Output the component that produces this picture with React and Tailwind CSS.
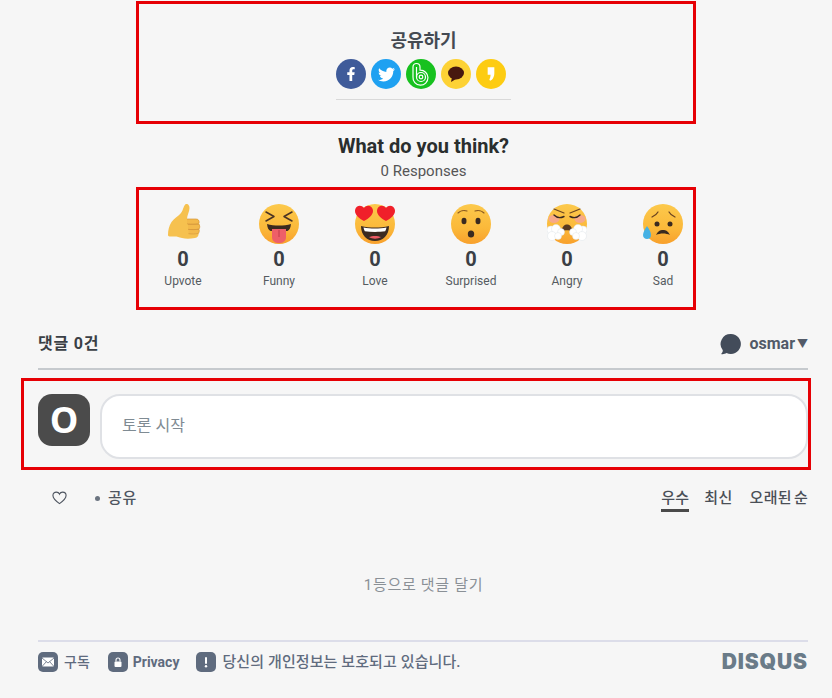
import { FaFacebookF, FaTwitter } from 'react-icons/fa'

const sans = "font-['Roboto','Noto_Sans_CJK_KR',sans-serif]"

function Face({ id, children }) {
  return (
    <svg width="40" height="40" viewBox="0 0 40 40">
      <defs>
        <linearGradient id={id} x1="0" y1="0" x2="0" y2="1">
          <stop offset="0" stopColor="#fcc94c" />
          <stop offset="0.6" stopColor="#fbb93a" />
          <stop offset="1" stopColor="#f8a02c" />
        </linearGradient>
      </defs>
      <circle cx="20" cy="20" r="20" fill={`url(#${id})`} />
      {children}
    </svg>
  )
}

function Thumb() {
  return (
    <svg width="40" height="40" viewBox="0 0 40 40">
      <path d="M23 0c2-.5 3.500 1.500 3.500 4 0 4-2.500 7-2.500 11h9c2.500 0 3.500 2 3 4 1 1.500 1 3.500 0 5 .5 1.500.5 3.500-.5 4.500.5 2.500-.5 5-3.500 5.500-5 .8-9 1-13 0-3-.8-5-1.500-7-1.500H6.500c-1-.2-1.500-.8-1.500-1.500 0-5 1-9 3.500-13 2.500-3.500 7-6 9.500-9 2.500-3 2.500-8 5-9z" fill="#f6c14f" />
      <path d="M24 15h9c2.500 0 3.500 2 3 4-1.500 1.200-7.500 1.200-12 .8M25 20.500h11c1 1.500 1 3 0 4.500-3 .8-7.500.8-11 .3M25.500 25.500h10.500c.5 1.500.2 3-.8 4-3 .6-6.500.6-9.700.2" fill="#f3b94a" stroke="#d6983c" strokeWidth="0.7" />
    </svg>
  )
}

function Funny() {
  return (
    <Face id="f1">
      <path d="M7 8l8 4.500-8 4.500M33 8l-8 4.500 8 4.500" fill="none" stroke="#4a3324" strokeWidth="1.500" strokeLinecap="round" strokeLinejoin="round" />
      <path d="M8 20c7 2 17 2 24 0-.5 4-1.500 6-3.500 7h-17c-2-1-3-3-3.500-7z" fill="#3b2a20" />
      <path d="M13 25h14v8c0 4-3 6-7 6s-7-2-7-6z" fill="#ee5f68" />
      <path d="M20 26v7" stroke="#c43c4a" strokeWidth="1" />
    </Face>
  )
}

function Heart({ x, y }) {
  return (
    <path
      transform={`translate(${x} ${y})`}
      d="M9 16C3.500 13-1 9 .2 4.500.9 1 6-1 9 3c3-4 8-2 8.800 1.500C19 9 14.500 13 9 16z"
      fill="#f0202a"
    />
  )
}

function Love() {
  return (
    <Face id="f2">
      <path d="M6 22c9 2 19 2 28 0 0 9-6 15-14 15S6 31 6 22z" fill="#3b2a20" />
      <path d="M8.500 23.500c7 1.300 16 1.300 23 0-.3 1.500-.7 2.800-1.300 3.800-6 .8-14 .8-20.400 0-.6-1-1-2.300-1.300-3.800z" fill="#fff" />
      <path d="M14 33c3-1.500 9-1.500 12 0-3 2.200-9 2.200-12 0z" fill="#ec5a64" />
      <Heart x={0} y={1} />
      <Heart x={22} y={1} />
    </Face>
  )
}

function Surprised() {
  return (
    <Face id="f3">
      <path d="M7 9c2-2 6-3 9-2M33 9c-2-2-6-3-9-2" fill="none" stroke="#8a5a20" strokeWidth="1.100" strokeLinecap="round" />
      <ellipse cx="13" cy="17" rx="2.500" ry="3.200" fill="#3a2a20" />
      <ellipse cx="27" cy="17" rx="2.500" ry="3.200" fill="#3a2a20" />
      <ellipse cx="20" cy="30" rx="3.200" ry="3.600" fill="#3a2a20" />
    </Face>
  )
}

function Cloud({ x, flip }) {
  return (
    <g transform={`translate(${x} 20) scale(${flip ? -1 : 1} 1)`} fill="#fff" stroke="#dfe5e8" strokeWidth="0.5">
      <circle cx="4" cy="6" r="4" />
      <circle cx="9" cy="5" r="4.500" />
      <circle cx="14" cy="8" r="3.500" />
      <circle cx="5" cy="12" r="4.500" />
      <circle cx="11" cy="12" r="3.500" />
    </g>
  )
}

function Angry() {
  return (
    <Face id="f4">
      <ellipse cx="7" cy="15" rx="5.500" ry="4" fill="#f7a98a" />
      <ellipse cx="33" cy="15" rx="5.500" ry="4" fill="#f7a98a" />
      <path d="M7 5l10 4M33 5l-10 4" stroke="#6b4522" strokeWidth="1.200" strokeLinecap="round" />
      <path d="M7 11c3 3 7 3 10 1.500M33 11c-3 3-7 3-10 1.500" fill="none" stroke="#3a2a20" strokeWidth="1.400" strokeLinecap="round" />
      <path d="M14 28c1-5 3-7.500 6-7.500s5 2.500 6 7.500c-4-2.500-8-2.500-12 0z" fill="#5a3a20" />
      <Cloud x={0} />
      <Cloud x={40} flip />
    </Face>
  )
}

function Sad() {
  return (
    <Face id="f5">
      <path d="M9 13c2-1 5-3 6-5M32 13c-2-1-5-3-6-5" fill="none" stroke="#6a4320" strokeWidth="1.200" strokeLinecap="round" />
      <circle cx="14" cy="20" r="2.500" fill="#3a2a20" />
      <circle cx="27" cy="20" r="2.500" fill="#3a2a20" />
      <path d="M13 31c2-4 4-5 7-5s5 1 7 5c-4-2-10-2-14 0z" fill="#3a2a20" />
      <path d="M4 22c2 3 4 6 4 9s-2 4-4 4-4-1.500-4-4 2-6 4-9z" fill="#45b1e4" />
    </Face>
  )
}

const reactions = [
  { label: 'Upvote', Icon: Thumb },
  { label: 'Funny', Icon: Funny },
  { label: 'Love', Icon: Love },
  { label: 'Surprised', Icon: Surprised },
  { label: 'Angry', Icon: Angry },
  { label: 'Sad', Icon: Sad },
]

function ShareButton({ className, children }) {
  return (
    <span className={`flex h-[30px] w-[30px] items-center justify-center rounded-full ${className}`}>
      {children}
    </span>
  )
}

function FooterIcon({ children }) {
  return (
    <span className="flex h-5 w-5 items-center justify-center rounded-[5px] bg-[#5f6b7e]">
      <svg width="14" height="14" viewBox="0 0 14 14">{children}</svg>
    </span>
  )
}

export default function App() {
  return (
    <div className={`h-[698px] w-[832px] overflow-hidden bg-[#f6f6f6] ${sans}`}>
      <section className="mx-auto mt-px flex h-[123px] w-[560px] flex-col items-center border-[3px] border-[#e60005] pt-[24px] pl-[15px]">
        <h2 className="text-[18px] leading-[26px] font-bold text-[#444a52]">공유하기</h2>
        <div className="mt-[5px] w-[175px] border-b border-[#d9d9d9] pb-[10px]">
          <div className="flex gap-[5px]">
            <ShareButton className="bg-[#3f5b9a] text-white">
              <FaFacebookF size={14} />
            </ShareButton>
            <ShareButton className="bg-[#1fa1f1] text-white">
              <FaTwitter size={17} />
            </ShareButton>
            <ShareButton className="bg-[#17c11f]">
              <svg width="22" height="24" viewBox="0 0 22 24" fill="none" stroke="#fff" strokeWidth="1.200">
                <path d="M3 15V5a3.500 3.500 0 0 1 7 0v3.200A7.500 7.500 0 1 1 3 15z" />
                <path d="M6.500 15V5" />
                <circle cx="11" cy="15" r="4.500" />
                <circle cx="11" cy="15" r="1.800" />
              </svg>
            </ShareButton>
            <ShareButton className="bg-[#fdd235]">
              <svg width="18" height="16" viewBox="0 0 18 16">
                <ellipse cx="9" cy="7" rx="8" ry="6.500" fill="#47180f" />
                <path d="M5 11l-1 5 5-3z" fill="#47180f" />
              </svg>
            </ShareButton>
            <ShareButton className="bg-[#fdcc12]">
              <svg width="10" height="16" viewBox="0 0 12 18">
                <path d="M2 1h8v7c0 4-2 8-5 9l-1-1c1-2 1.500-4 1.500-6H2z" fill="#fff" />
              </svg>
            </ShareButton>
          </div>
        </div>
      </section>

      <div className="mt-[9px] pl-[15px] text-center">
        <h2 className="text-[20px] leading-[26px] font-bold text-[#2a2e2e]">What do you think?</h2>
        <p className="mt-[2px] text-[15px] leading-[20px] text-[#555]">0 Responses</p>
      </div>

      <section className="mx-auto mt-[6px] flex h-[123px] w-[560px] gap-10 border-[3px] border-[#e60005] pt-[14px] pl-4">
        {reactions.map(({ label, Icon }) => (
          <div key={label} className="flex w-14 flex-col items-center">
            <Icon />
            <span className="mt-[3px] text-[20px] leading-[24px] font-bold text-[#3b3f45]">0</span>
            <span className="mt-[1px] text-[12px] leading-[18px] whitespace-nowrap text-[#555b61]">{label}</span>
          </div>
        ))}
      </section>

      <header className="mt-[16px] ml-[38px] flex h-[44px] w-[770px] items-center justify-between border-b-2 border-[#c6cace] pb-[7px]">
        <span className="text-[16px] font-bold tracking-[0.8px] text-[#3a3f45]">댓글 0건</span>
        <div className="flex items-center text-[16px] font-bold text-[#525a68]">
          <svg width="22" height="22" viewBox="0 0 22 22">
            <path d="M11 1a10 10 0 1 1-4.500 19C5 21 3 21.500 1 21c1.200-1 1.800-2.200 1.800-3.800A10 10 0 0 1 11 1z" fill="#434c5a" />
          </svg>
          <span className="ml-[7px]">osmar</span>
          <span className="mt-[3px] ml-[2px] text-[11px]">▼</span>
        </div>
      </header>

      <section className="mt-[8px] ml-[21px] flex h-[92px] w-[790px] items-start gap-[10px] border-[3px] border-[#e60005] pt-[13px] pl-[14px]">
        <div className="flex h-[52px] w-[52px] items-center justify-center rounded-[14px] bg-[#4b4b4b] font-['Open_Sans',sans-serif] text-[36px] font-bold text-white">
          O
        </div>
        <div className="flex h-[65px] w-[708px] items-center rounded-[20px] border-2 border-[#dfe1e5] bg-white pb-[2px] pl-[20px] text-[16px] text-[#7f8b93]">
          토론 시작
        </div>
      </section>

      <nav className="mt-[15px] ml-[38px] flex h-[27px] w-[770px] items-start justify-between text-[15px] leading-[26px] text-[#4e5560]">
        <div className="flex items-center">
          <svg className="ml-[14px]" width="15" height="14" viewBox="0 0 24 22" fill="none" stroke="#4e5560" strokeWidth="1.800">
            <path d="M12 20C5 15 1.500 11 1.500 7 1.500 3.500 4 1.500 7 1.500c2 0 4 1 5 3.200 1-2.200 3-3.200 5-3.200 3 0 5.500 2 5.500 5.500 0 4-3.500 8-10.500 13z" />
          </svg>
          <span className="ml-[28px] h-[5px] w-[5px] rounded-full bg-[#6b7480]" />
          <span className="ml-[8px] font-medium tracking-[0.8px]">공유</span>
        </div>
        <div className="flex gap-[15px] font-medium tracking-[0.3px] text-[#4a4f57]">
          <span className="h-[27px] border-b-[3px] border-[#4a4a4a]">우수</span>
          <span>최신</span>
          <span className="ml-[2px] [word-spacing:-2px]">오래된 순</span>
        </div>
      </nav>

      <p className="mt-[61px] pl-[15px] text-center text-[15px] leading-[24px] tracking-[0.7px] text-[#8a9096]">1등으로 댓글 달기</p>

      <footer className="mt-[43px] ml-[38px] flex w-[770px] items-center justify-between border-t-2 border-[#dcdde9] pt-[9px] text-[14px] text-[#5f6b7e]">
        <div className="flex items-center font-medium">
          <FooterIcon>
            <rect x="1" y="2.500" width="12" height="9" rx="1" fill="#fff" />
            <path d="M1 3l6 5 6-5M1 11.500l4.500-5M13 11.500l-4.500-5" fill="none" stroke="#5f6b7e" strokeWidth="0.800" />
          </FooterIcon>
          <span className="ml-[6px]">구독</span>
          <span className="ml-[18px]">
            <FooterIcon>
              <rect x="3.500" y="6.500" width="7" height="5.500" rx="1" fill="#fff" />
              <path d="M5 6.500V5a2 2 0 0 1 4 0v1.500" fill="none" stroke="#fff" strokeWidth="1.100" />
            </FooterIcon>
          </span>
          <span className="ml-[5px] font-bold">Privacy</span>
          <span className="ml-[17px]">
            <FooterIcon>
              <rect x="6" y="2" width="2" height="7" rx="1" fill="#fff" />
              <circle cx="7" cy="11.300" r="1.200" fill="#fff" />
            </FooterIcon>
          </span>
          <span className="ml-[6px] text-[15px] tracking-[0.1px]">당신의 개인정보는 보호되고 있습니다.</span>
        </div>
        <span className="font-['Inter',sans-serif] text-[21px] leading-[20px] font-black tracking-[0.9px] text-[#6a7b88]">DISQUS</span>
      </footer>
    </div>
  )
}
